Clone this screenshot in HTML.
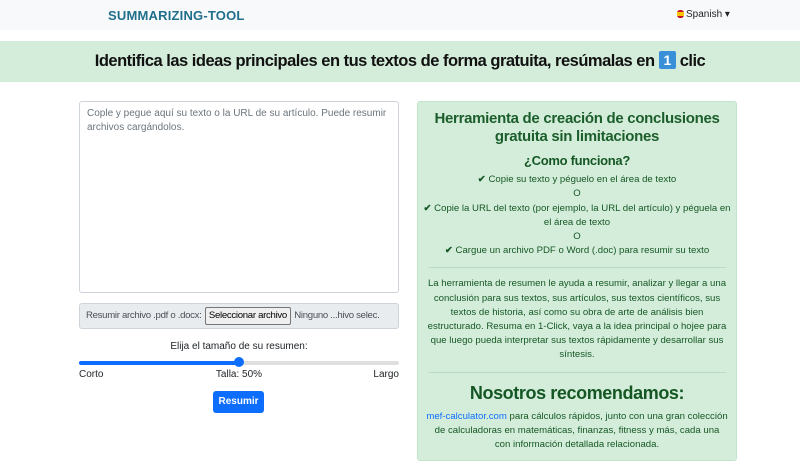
<!DOCTYPE html>
<html><head><meta charset="utf-8"><style>
*{box-sizing:border-box;margin:0;padding:0}
body{width:800px;height:449px;overflow:hidden;background:#fff;font-family:"Liberation Sans",sans-serif;color:#212529}
.nav{height:30px;background:#f8f9fa;position:relative}
.brand{position:absolute;left:108px;top:8px;font-size:13px;font-weight:bold;color:#1f6f8b;letter-spacing:0.2px}
.lang{position:absolute;left:677px;top:9px;font-size:10px;color:#212529}
.lang i{display:inline-block;width:7px;height:8px;border-radius:3px;background:linear-gradient(#c60b1e 25%,#ffc400 25%,#ffc400 75%,#c60b1e 75%);vertical-align:-1px;margin-right:2px}
.hero{position:absolute;top:41px;left:0;width:800px;height:41px;background:#d4edda;text-align:center;font-size:16.5px;font-weight:bold;line-height:41px;letter-spacing:-0.5px;color:#111}
.hero b{display:inline-block;background:#3a8fd9;color:#fff;width:17px;height:18px;line-height:18px;font-size:14px;border-radius:2px;vertical-align:1px}
textarea{position:absolute;left:79px;top:101px;width:320px;height:192px;border:1px solid #ced4da;border-radius:3px;padding:5px 7px;font:10px/14px "Liberation Sans",sans-serif;color:#6c757d;resize:none}
.file{position:absolute;left:79px;top:303px;width:320px;height:26px;background:#e9ecef;border:1px solid #ced4da;border-radius:3px;font-size:9.6px;color:#495057;line-height:24px;padding-left:6px;white-space:nowrap;overflow:hidden;letter-spacing:-0.3px}
.file span{display:inline-block;background:#efefef;border:1px solid #767676;border-radius:2px;color:#000;line-height:16px;padding:0 3px;margin:0 1px}
.lbl{position:absolute;left:79px;width:320px;text-align:center;font-size:10px}
.track{position:absolute;left:79px;top:361px;width:320px;height:4px;background:#dfdfdf;border-radius:2px}
.track div{width:160px;height:4px;background:#0d6efd;border-radius:2px}
.thumb{position:absolute;left:234px;top:357px;width:10px;height:10px;border-radius:50%;background:#0d6efd}
.btn{position:absolute;left:213px;top:391px;width:51px;height:22px;background:#0d6efd;color:#fff;border-radius:3px;font-size:10px;font-weight:bold;text-align:center;line-height:22px}
.card{position:absolute;left:417px;top:101px;width:320px;height:360px;background:#d4edda;border:1px solid #c3e6cb;border-radius:3px;text-align:center;color:#155724;font-size:9.6px;line-height:14.2px}
.card h2{font-size:15px;line-height:18px;margin-top:8px;font-weight:bold;color:#1b5e2b;letter-spacing:-0.3px}
.card h3{font-size:13px;margin:8px 0 5px;font-weight:bold;letter-spacing:-0.3px}
.ck{color:#155724;font-weight:bold}
hr{border:0;border-top:1px solid #b9dcc1;margin:9px 10px}
.card h4{font-size:18px;font-weight:bold;margin-top:9px;line-height:22px;letter-spacing:-0.4px}
a{color:#0d6efd;text-decoration:none}
</style></head><body>
<div class="nav"><div class="brand">SUMMARIZING-TOOL</div><div class="lang"><i></i>Spanish ▾</div></div>
<div class="hero">Identifica las ideas principales en tus textos de forma gratuita, resúmalas en <b>1</b> clic</div>
<textarea>Cople y pegue aquí su texto o la URL de su artículo. Puede resumir archivos cargándolos.</textarea>
<div class="file">Resumir archivo .pdf o .docx: <span>Seleccionar archivo</span> Ninguno ...hivo selec.</div>
<div class="lbl" style="top:341px">Elija el tamaño de su resumen:</div>
<div class="track"><div></div></div><div class="thumb"></div>
<div class="lbl" style="top:369px;text-align:left">Corto</div>
<div class="lbl" style="top:369px">Talla: 50%</div>
<div class="lbl" style="top:369px;text-align:right">Largo</div>
<div class="btn">Resumir</div>
<div class="card">
<h2>Herramienta de creación de conclusiones<br>gratuita sin limitaciones</h2>
<h3>¿Como funciona?</h3>
<div><span class="ck">✔</span> Copie su texto y péguelo en el área de texto</div>
<div>O</div>
<div style="padding:0 4px"><span class="ck">✔</span> Copie la URL del texto (por ejemplo, la URL del artículo) y péguela en<br>el área de texto</div>
<div>O</div>
<div><span class="ck">✔</span> Cargue un archivo PDF o Word (.doc) para resumir su texto</div>
<hr>
<div style="padding:0 8px">La herramienta de resumen le ayuda a resumir, analizar y llegar a una conclusión para sus textos, sus artículos, sus textos científicos, sus textos de historia, así como su obra de arte de análisis bien estructurado. Resuma en 1-Click, vaya a la idea principal o hojee para que luego pueda interpretar sus textos rápidamente y desarrollar sus síntesis.</div>
<hr>
<h4>Nosotros recomendamos:</h4>
<div style="padding:0 8px;margin-top:6px"><a>mef-calculator.com</a> para cálculos rápidos, junto con una gran colección de calculadoras en matemáticas, finanzas, fitness y más, cada una con información detallada relacionada.</div>
</div>
</body></html>
